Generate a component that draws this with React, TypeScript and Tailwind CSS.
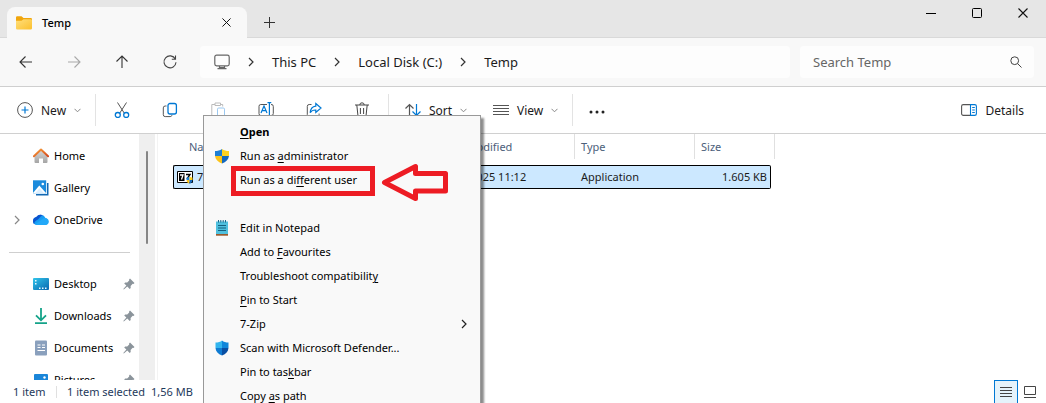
import { Fragment } from "react";
import type { ReactNode } from "react";

interface MenuEntry {
  // "&" marks the access key
  label: string;
  icon?: ReactNode;
  bold?: boolean;
  boxed?: boolean;
  submenu?: boolean;
}

const menuEntries: (MenuEntry | null)[] = [
  { label: "&Open", bold: true },
  { label: "Run as &administrator", icon: <UacShield size={16} /> },
  { label: "Run as a di&fferent user", boxed: true },
  null,
  { label: "Edit in Notepad", icon: <NotepadIcon /> },
  { label: "Add to &Favourites" },
  { label: "Troubleshoot compatibilit&y" },
  { label: "&Pin to Start" },
  { label: "7-Zip", submenu: true },
  { label: "Scan with Microsoft Defender...", icon: <DefenderIcon /> },
  { label: "Pin to tas&kbar" },
  { label: "Copy &as path" },
];

const places = [
  { label: "Home", icon: <HomeIcon /> },
  { label: "Gallery", icon: <GalleryIcon /> },
  { label: "OneDrive", icon: <OneDriveIcon />, expandable: true },
];

const pinned = [
  { label: "Desktop", icon: <DesktopIcon /> },
  { label: "Downloads", icon: <DownloadsIcon /> },
  { label: "Documents", icon: <DocumentsIcon /> },
  { label: "Pictures", icon: <PicturesIcon /> },
];

const crumbs = ["This PC", "Local Disk (C:)", "Temp"];

export default function App() {
  return (
    <div className="relative flex h-screen flex-col overflow-hidden bg-white font-['Noto_Sans','Open_Sans',sans-serif] text-[11px] leading-4 text-[#1b1b1b]">
      <TitleBar />
      <NavBar />
      <Toolbar />
      <div className="flex min-h-0 flex-1">
        <Sidebar />
        <FileList />
      </div>
      <StatusBar />
      <ContextMenu />
    </div>
  );
}

function TitleBar() {
  return (
    <header className="flex h-[38px] shrink-0 border-b border-[#d9d9d9] bg-[#e6e6e6] pl-[7px]">
      <div className="mt-[7px] -mb-px flex w-60 items-center rounded-t-lg bg-[#f8f8f8] pr-[13px] pl-[9px]">
        <FolderIcon />
        <span className="ml-[10px] flex-1 font-medium text-black">Temp</span>
        <button type="button" aria-label="Close tab" className="flex size-4 items-center justify-center">
          <CloseGlyph size={9} />
        </button>
      </div>
      <button type="button" aria-label="New tab" className="mt-[7px] ml-[10px] flex w-6 items-center justify-center">
        <svg width="11" height="11" viewBox="0 0 11 11" stroke="#333" strokeWidth="1">
          <path d="M5.5 0v11M0 5.5h11" />
        </svg>
      </button>
      <div className="mb-[11px] ml-auto flex">
        <button type="button" aria-label="Minimize" className="flex w-[46px] items-center justify-center">
          <svg width="10" height="10" viewBox="0 0 10 10" stroke="#000">
            <path d="M0 5.5h10" />
          </svg>
        </button>
        <button type="button" aria-label="Maximize" className="flex w-[46px] items-center justify-center">
          <svg width="10" height="10" viewBox="0 0 10 10" fill="none" stroke="#000">
            <rect x=".5" y=".5" width="9" height="9" rx="1" />
          </svg>
        </button>
        <button type="button" aria-label="Close" className="flex w-[46px] items-center justify-center">
          <CloseGlyph size={10} />
        </button>
      </div>
    </header>
  );
}

function NavBar() {
  return (
    <div className="flex h-[49px] shrink-0 items-center border-b border-[#cfcfcf] bg-[#f8f8f8] pr-3 pl-[2px]">
      <NavButton label="Back">
        <path d="M14 8H2.500M7.500 2.500L2 8l5.500 5.500" stroke="#333" />
      </NavButton>
      <NavButton label="Forward">
        <path d="M2 8h11.500M8.500 2.500L14 8l-5.500 5.500" stroke="#a8a8a8" />
      </NavButton>
      <NavButton label="Up">
        <path d="M8 14V2.500M2.500 7.500L8 2l5.500 5.500" stroke="#333" />
      </NavButton>
      <NavButton label="Refresh">
        <path d="M13.300 5A6 6 0 1 0 14 8.200M13.500 1.500V5.200H9.800" stroke="#444" />
      </NavButton>
      <nav aria-label="Address" className="ml-[6px] flex h-8 flex-1 items-center rounded bg-[#fdfdfd] pl-[14px] text-[13px]">
        <svg width="16" height="16" viewBox="0 0 16 16" fill="none" stroke="#666" strokeWidth="1.200">
          <rect x=".8" y="1.200" width="14.400" height="10.600" rx="1.800" />
          <path d="M5.500 12v2.300M10.500 12v2.300M3.500 14.600h9M6 13.500h4" />
        </svg>
        {crumbs.map((c) => (
          <Fragment key={c}>
            <span className="flex w-[42px] justify-center">
              <ChevronRight color="#333" />
            </span>
            <button type="button">{c}</button>
          </Fragment>
        ))}
      </nav>
      <div className="ml-[10px] flex h-8 w-[234px] items-center rounded bg-[#fdfdfd] pr-3 pl-[13px]">
        <input
          type="search"
          aria-label="Search Temp"
          placeholder="Search Temp"
          className="min-w-0 flex-1 bg-transparent text-[13px] outline-none placeholder:text-[#666]"
        />
        <svg width="12" height="12" viewBox="0 0 12 12" fill="none" stroke="#444">
          <circle cx="4.700" cy="4.700" r="3.900" />
          <path d="M7.600 7.600l3.900 3.900" />
        </svg>
      </div>
    </div>
  );
}

function NavButton({ label, children }: { label: string; children: ReactNode }) {
  return (
    <button type="button" aria-label={label} className="flex h-8 w-12 items-center justify-center">
      <svg width="16" height="16" viewBox="0 0 16 16" fill="none" strokeWidth="1.100">
        {children}
      </svg>
    </button>
  );
}

function Toolbar() {
  return (
    <div role="toolbar" className="flex h-[47px] shrink-0 items-center border-b border-[#d0d0d0] bg-white">
      <button type="button" className="flex w-[95px] items-center pl-[17px]">
        <svg width="16" height="16" viewBox="0 0 16 16" fill="none">
          <circle cx="8" cy="8" r="7.400" stroke="#555" />
          <path d="M8 4.500v7M4.500 8h7" stroke="#0078d4" strokeWidth="1.200" />
        </svg>
        <ToolLabel>New</ToolLabel>
        <ChevronDown />
      </button>
      <Divider />
      <div className="mx-[2px] flex">
        <ToolButton label="Cut">
          <path d="M3.500 .5l6.800 10.700M12.500 .5L5.700 11.200" stroke="#555" />
          <circle cx="3.800" cy="13" r="2.500" stroke="#0078d4" strokeWidth="1.300" />
          <circle cx="12.200" cy="13" r="2.500" stroke="#0078d4" strokeWidth="1.300" />
        </ToolButton>
        <ToolButton label="Copy">
          <path d="M4.500 4H3.200A1.900 1.900 0 0 0 1.300 5.900v6.800a1.900 1.900 0 0 0 1.900 1.900h5A1.900 1.900 0 0 0 10 13.200" stroke="#555" />
          <rect x="6" y="1.500" width="8.400" height="10.500" rx="2" stroke="#0078d4" strokeWidth="1.300" />
        </ToolButton>
        <ToolButton label="Paste">
          <path d="M5 2.500H1.800v12.300H6M11 2.500h1.700V4.500M5 1h5.500v2.500H5z" stroke="#bbb" />
          <rect x="7.500" y="6" width="7" height="9" rx="1.200" stroke="#9bc8f0" />
        </ToolButton>
        <ToolButton label="Rename">
          <path d="M9 2.500H2.800A1.800 1.800 0 0 0 1 4.300v7.400a1.800 1.800 0 0 0 1.800 1.800H9M13 2.500a2 2 0 0 1 2.300 2v7a2 2 0 0 1-2.300 2" stroke="#555" />
          <path d="M3 11l3-7 3 7M4 8.700h4M9.500 .7h3.800M11.400 .7v14.600M9.500 15.300h3.800" stroke="#0078d4" strokeWidth="1.200" />
        </ToolButton>
        <ToolButton label="Share">
          <path d="M5.500 2.500H3.200a1.900 1.900 0 0 0-1.900 1.900v8.200a1.900 1.900 0 0 0 1.900 1.900h8a1.900 1.900 0 0 0 1.900-1.900v-1" stroke="#555" />
          <path d="M9.800 1.500L15 6l-5.200 4.500V8C7 7.800 5.300 9 4.200 10.700 4.500 7 6.300 4.400 9.800 4.100z" stroke="#0078d4" strokeWidth="1.200" />
        </ToolButton>
        <ToolButton label="Delete">
          <path d="M1 3h14M2.800 3l1.300 12h7.800l1.300-12M5.800 3a2.200 2.200 0 0 1 4.400 0M6.400 6v6M9.600 6v6" stroke="#444" />
        </ToolButton>
      </div>
      <Divider />
      <button type="button" className="flex w-[88px] items-center pl-4">
        <svg width="16" height="16" viewBox="0 0 16 16" fill="none" strokeWidth="1.200">
          <path d="M4.500 14V2.500M.5 6.500l4-4 4 4" stroke="#555" />
          <path d="M11.500 2v11.500M7.500 9.500l4 4 4-4" stroke="#0078d4" />
        </svg>
        <ToolLabel>Sort</ToolLabel>
        <ChevronDown />
      </button>
      <button type="button" className="flex w-[95px] items-center pl-4">
        <svg width="16" height="12" viewBox="0 0 16 12" stroke="#555">
          <path d="M0 1.500h16M0 4.500h16M0 7.500h16M0 10.500h16" />
        </svg>
        <ToolLabel>View</ToolLabel>
        <ChevronDown />
      </button>
      <Divider />
      <button type="button" aria-label="See more" className="flex w-12 items-center justify-center pt-1">
        <svg width="16" height="4" viewBox="0 0 16 4" fill="#222">
          <circle cx="2" cy="2" r="1.500" />
          <circle cx="8" cy="2" r="1.500" />
          <circle cx="14" cy="2" r="1.500" />
        </svg>
      </button>
      <button type="button" className="mr-[14px] ml-auto flex items-center">
        <svg width="16" height="12" viewBox="0 0 16 12" fill="none">
          <path d="M9.500 .6H2.300A1.700 1.700 0 0 0 .6 2.300v7.400a1.700 1.700 0 0 0 1.700 1.700h7.200" stroke="#555" strokeWidth="1.100" />
          <path d="M9.500 .6h4.200a1.700 1.700 0 0 1 1.700 1.700v7.400a1.700 1.700 0 0 1-1.700 1.700H9.500zM11.200 3.500h2.600M11.200 6h2.600M11.200 8.500h2.600" stroke="#0078d4" strokeWidth="1.100" />
        </svg>
        <ToolLabel>Details</ToolLabel>
      </button>
    </div>
  );
}

function ToolLabel({ children }: { children: ReactNode }) {
  return <span className="mr-2 ml-2 pt-[2px] text-[12px]">{children}</span>;
}

function ToolButton({ label, children }: { label: string; children: ReactNode }) {
  return (
    <button type="button" aria-label={label} className="flex h-8 w-12 items-center justify-center">
      <svg width="16" height="16" viewBox="0 0 16 16" fill="none">
        {children}
      </svg>
    </button>
  );
}

function Divider() {
  return <div className="h-8 w-px bg-[#e3e3e3]" />;
}

function Sidebar() {
  return (
    <aside className="flex w-[155px] shrink-0">
      <div className="flex-1 overflow-hidden pt-[6px]">
        {places.map((p) => (
          <a key={p.label} href="#" className="flex h-8 items-center text-black">
            <span className="flex w-[33px] justify-center">
              {p.expandable && <ChevronRight color="#888" />}
            </span>
            {p.icon}
            <span className="ml-[5px]">{p.label}</span>
          </a>
        ))}
        <hr className="mx-[9px] mt-4 mb-[15px] border-[#cfcfcf]" />
        {pinned.map((p) => (
          <a key={p.label} href="#" className="flex h-8 items-center pr-1 pl-[33px] text-black">
            {p.icon}
            <span className="ml-[5px] flex-1">{p.label}</span>
            <PinIcon />
          </a>
        ))}
      </div>
      <div className="flex w-4 justify-center bg-[#efefef] pt-[17px]">
        <div className="h-[93px] w-[2px] rounded bg-[#858585]" />
      </div>
    </aside>
  );
}

function FileList() {
  return (
    <main className="ml-[2px] flex-1 overflow-hidden border-l border-[#f3f3f3] pl-[15px]">
      <table className="w-[602px] table-fixed border-separate border-spacing-0 text-left">
        <colgroup>
          <col className="w-[260px]" />
          <col className="w-[142px]" />
          <col className="w-[120px]" />
          <col className="w-[76px]" />
          <col className="w-1" />
        </colgroup>
        <thead className="text-[#4c607a]">
          <tr className="h-[25px]">
            <th className="border-r border-[#e0e0e0] pl-4 font-normal">Name</th>
            <th className="border-r border-[#e0e0e0] pl-[6px] font-normal">Date modified</th>
            <th className="border-r border-[#e0e0e0] pl-[6px] font-normal">Type</th>
            <th className="pl-[6px] font-normal">Size</th>
            <th className="border-r border-[#e0e0e0]" />
          </tr>
        </thead>
        <tbody>
          <tr className="h-[6px]" />
          <tr className="h-6">
            <td className="rounded-l-xs border border-r-0 border-black bg-[#cce8ff] pl-[3px]">
              <span className="flex items-center gap-1">
                <SevenZipIcon />
                7z.exe
              </span>
            </td>
            <td className="border-y border-black bg-[#cce8ff] pl-[6px]">05.05.2025 11:12</td>
            <td className="border-y border-black bg-[#cce8ff] pl-[6px]">Application</td>
            <td className="rounded-r-xs border border-l-0 border-black bg-[#cce8ff] pr-[3px] text-right">1.605 KB</td>
          </tr>
        </tbody>
      </table>
    </main>
  );
}

function StatusBar() {
  return (
    <footer className="flex h-[23px] shrink-0 items-center bg-white pl-[13px] text-[#1e395b]">
      <span className="w-[43px]">1 item</span>
      <span className="mr-[10px] h-3 w-px bg-[#e0e0e0]" />
      <span>1 item selected</span>
      <span className="ml-[6px]">1,56 MB</span>
      <button
        type="button"
        aria-label="Details view"
        className="ml-auto flex h-full w-6 items-center justify-center border border-b-0 border-[#0078d4] bg-[#e5f3fb]"
      >
        <svg width="12" height="11" viewBox="0 0 12 11" stroke="#444">
          <path d="M0 .5h12M0 3.500h12M0 6.500h12M0 9.500h12" />
        </svg>
      </button>
      <button type="button" aria-label="Large icons view" className="mr-[10px] ml-[6px]">
        <svg width="12" height="12" viewBox="0 0 12 12" fill="none" stroke="#444">
          <path d="M.5 .5h11v8H.5zM0 11.500h12" />
        </svg>
      </button>
    </footer>
  );
}

function ContextMenu() {
  return (
    <div
      role="menu"
      className="absolute top-[115px] left-[203px] w-[278px] border border-[#999] bg-[#f9f9f9] pt-1 pb-8 text-black shadow-[3px_3px_2px_rgba(0,0,0,0.45)]"
    >
      {menuEntries.map((entry, i) =>
        entry ? <MenuRow key={entry.label} entry={entry} /> : <div key={i} className="h-6" />
      )}
      <svg className="absolute top-[47px] left-[177px]" width="68" height="40" viewBox="0 0 68 40" fill="none" stroke="#ed1c24" strokeWidth="5" strokeLinejoin="round">
        <path d="M3.500 19.500L34.500 3.500V10.500H64.500V28H34.500V35.500z" />
      </svg>
    </div>
  );
}

function MenuRow({ entry }: { entry: MenuEntry }) {
  const [before, rest] = entry.label.includes("&") ? entry.label.split("&") : [entry.label, ""];
  return (
    <button type="button" role="menuitem" className="relative flex h-6 w-full items-center">
      <span className="flex w-9 shrink-0 justify-center">{entry.icon}</span>
      <span className={entry.bold ? "font-bold" : ""}>
        {before}
        {rest && <u className="underline-offset-2">{rest[0]}</u>}
        {rest.slice(1)}
      </span>
      {entry.submenu && (
        <span className="mr-3 ml-auto">
          <ChevronRight color="#222" />
        </span>
      )}
      {entry.boxed && <span className="absolute -top-[2px] left-[27px] h-[30px] w-36 border-5 border-[#ed1c24]" />}
    </button>
  );
}

function ChevronRight({ color }: { color: string }) {
  return (
    <svg width="8" height="10" viewBox="0 0 8 10" fill="none" stroke={color} strokeWidth="1.200">
      <path d="M2 1l4 4-4 4" />
    </svg>
  );
}

function ChevronDown() {
  return (
    <svg width="7" height="5" viewBox="0 0 7 5" fill="none" stroke="#888">
      <path d="M.5 .8l3 3 3-3" />
    </svg>
  );
}

function CloseGlyph({ size }: { size: number }) {
  return (
    <svg width={size} height={size} viewBox="0 0 10 10" stroke="#111" strokeWidth="1.100">
      <path d="M.5 .5l9 9M9.500 .5l-9 9" />
    </svg>
  );
}

function FolderIcon() {
  return (
    <svg width="16" height="14" viewBox="0 0 16 14">
      <defs>
        <linearGradient id="folder" x1="0" y1="0" x2="1" y2="1">
          <stop offset="0" stopColor="#ffdf7d" />
          <stop offset="1" stopColor="#fbc02d" />
        </linearGradient>
      </defs>
      <path d="M0 1.500A1.200 1.200 0 0 1 1.200 .3h4.300L7.500 2h7.300A1.200 1.200 0 0 1 16 3.200V6H0z" fill="#f0a50c" />
      <path d="M0 4.800h5.500l2-1.600h7.300A1.200 1.200 0 0 1 16 4.400v7.800a1.200 1.200 0 0 1-1.200 1.200H1.200A1.200 1.200 0 0 1 0 12.200z" fill="url(#folder)" />
    </svg>
  );
}

function HomeIcon() {
  return (
    <svg width="16" height="16" viewBox="0 0 16 16">
      <defs>
        <linearGradient id="wall" x1="0" y1="0" x2="0" y2="1">
          <stop offset="0" stopColor="#d8d8d8" />
          <stop offset="1" stopColor="#a5a5a5" />
        </linearGradient>
        <linearGradient id="roof" x1="0" y1="0" x2="1" y2="1">
          <stop offset="0" stopColor="#f9a13b" />
          <stop offset="1" stopColor="#d3461c" />
        </linearGradient>
      </defs>
      <path d="M1.500 7.500L8 1.800l6.500 5.700V14a1 1 0 0 1-1 1H10v-4.500H6V15H2.500a1 1 0 0 1-1-1z" fill="url(#wall)" />
      <path d="M.9 8.200L8 1.600l7.100 6.600" fill="none" stroke="url(#roof)" strokeWidth="2" strokeLinecap="round" strokeLinejoin="round" />
    </svg>
  );
}

function GalleryIcon() {
  return (
    <svg width="16" height="16" viewBox="0 0 16 16">
      <path d="M3 3h12.500v12.500H3z" fill="#1268b3" />
      <path d="M0 0h14v14H0z" fill="#fff" />
      <path d="M0 .3h13.200v13.200H0z" fill="#1c8bdc" />
      <path d="M0 13l6.300-7.500L13 13v.5H0z" fill="#fff" />
      <path d="M1.800 13.500l4.700-5.300 4.800 5.300z" fill="#dcefff" />
      <circle cx="9.800" cy="4" r="1.300" fill="#fff" />
    </svg>
  );
}

function OneDriveIcon() {
  return (
    <svg width="16" height="16" viewBox="0 0 16 16">
      <defs>
        <linearGradient id="cloud" x1="0" y1="0" x2="1" y2="1">
          <stop offset="0" stopColor="#1479e8" />
          <stop offset="1" stopColor="#17c5ff" />
        </linearGradient>
      </defs>
      <path d="M4 13a4 4 0 0 1-.7-7.900A5.200 5.200 0 0 1 12.500 6 3.600 3.600 0 0 1 12.600 13z" fill="url(#cloud)" />
      <path d="M1.300 12.200C1.200 9 3.500 8.500 5.200 7.200 7 5.800 7.500 3.500 10 3.300 5.500 1.300 3.300 5.100 3.300 5.100-.5 6-.8 10.500 1.300 12.200z" fill="#0b53ce" />
      <path d="M2 12.400L9.800 6.900a3.700 3.700 0 0 1 6 3.200A3.400 3.400 0 0 1 12.600 13H4a4 4 0 0 1-2-.6z" fill="#22a8f8" />
    </svg>
  );
}

function DesktopIcon() {
  return (
    <svg width="16" height="12" viewBox="0 0 16 12">
      <defs>
        <linearGradient id="desk" x1="0" y1="0" x2="1" y2="1">
          <stop offset="0" stopColor="#32c5ea" />
          <stop offset="1" stopColor="#0867b0" />
        </linearGradient>
      </defs>
      <rect width="16" height="12" rx="1" fill="url(#desk)" />
      <path d="M2 2h1.500v1.500H2zM2 5h1.500v1.500H2zM6 9.500h1.500V11H6zM9 9.500h1.500V11H9zM12 9.500h1.500V11H12z" fill="#e8f8ff" />
    </svg>
  );
}

function DownloadsIcon() {
  return (
    <svg width="16" height="16" viewBox="0 0 16 16" fill="none" stroke="#14a389" strokeWidth="1.800">
      <path d="M8 0v12M3 7.300l5 5 5-5M2 15.100h12" />
    </svg>
  );
}

function DocumentsIcon() {
  return (
    <svg width="16" height="16" viewBox="0 0 16 16">
      <rect x="2" y=".5" width="12" height="15" rx="1" fill="#8aa0bd" />
      <path d="M4.500 5h3M4.500 7.500h3M9 5h3M9 7.500h3M4.500 10.500h7.500" stroke="#fff" strokeWidth="1.200" />
    </svg>
  );
}

function PicturesIcon() {
  return (
    <svg width="16" height="13" viewBox="0 0 16 13">
      <rect x="1" width="14" height="13" rx="1" fill="#1a86d9" />
      <circle cx="11.500" cy="3.500" r="1.200" fill="#fff" />
      <path d="M2 13l5.500-6 5.500 6z" fill="#fff" />
    </svg>
  );
}

function PinIcon() {
  return (
    <svg width="12" height="12" viewBox="0 0 12 12" fill="#8b949b">
      <path d="M7 .5L11.500 5l-1 .9-.8-.1-2.100 2.100.1 2-1 1L4.300 8.500.8 11.600l-.5-.5L3.400 7.600 1.200 5.400l1-1 2 .1 2-2.100-.1-.9z" />
    </svg>
  );
}

function UacShield({ size }: { size: number }) {
  return (
    <svg width={size} height={size} viewBox="0 0 16 16">
      <path d="M8 1C6 2.500 3.700 3 1 3v5h7z" fill="#1f7fd4" />
      <path d="M8 1c2 1.500 4.300 2 7 2v5H8z" fill="#ffd21f" />
      <path d="M1 8c.5 3.500 3 6 7 7.500V8z" fill="#fbc31a" />
      <path d="M15 8c-.5 3.500-3 6-7 7.500V8z" fill="#1569bd" />
    </svg>
  );
}

function DefenderIcon() {
  return (
    <svg width="14" height="16" viewBox="0 0 14 16">
      <path d="M7 .5C5.500 2 3 2.600.5 2.600V8H7z" fill="#33b5ee" />
      <path d="M7 .5c1.500 1.500 4 2.100 6.500 2.100V8H7z" fill="#0f86da" />
      <path d="M.5 8c.3 3.500 2.500 6 6.500 7.500V8z" fill="#0f7bd2" />
      <path d="M13.500 8c-.3 3.500-2.500 6-6.500 7.500V8z" fill="#094fa3" />
    </svg>
  );
}

function NotepadIcon() {
  return (
    <svg width="14" height="16" viewBox="0 0 14 16">
      <rect x="1" y="1.500" width="12" height="13" fill="#4fc0de" />
      <path d="M1 14h12v1.700H1z" fill="#9a5a2c" />
      <path d="M3.500 0v2.500M5.800 0v2.500M8.200 0v2.500M10.500 0v2.500" stroke="#17678a" />
      <path d="M3 5.500h8M3 8h8M3 10.500h8" stroke="#14617f" strokeWidth="1.200" />
    </svg>
  );
}

function SevenZipIcon() {
  return (
    <svg width="16" height="14" viewBox="0 0 16 14">
      <path d="M.5 1.500h15v11H.5z" fill="#fff" stroke="#000" />
      <path d="M2 3h5.500v8H2z" />
      <path d="M3 5h3L4.500 9.500" fill="none" stroke="#fff" strokeWidth="1.300" />
      <path d="M9 4.500h4L10 9" fill="none" stroke="#000" strokeWidth="1.400" />
      <path d="M12.500 6.500c-1 .8-2 1-3 1V10h3z" fill="#1f7fd4" />
      <path d="M12.500 6.500c1 .8 2 1 3 1V10h-3z" fill="#ffd21f" />
      <path d="M9.500 10c.2 2 1.300 3.200 3 4v-4z" fill="#fbc31a" />
      <path d="M15.500 10c-.2 2-1.300 3.200-3 4v-4z" fill="#1569bd" />
    </svg>
  );
}
